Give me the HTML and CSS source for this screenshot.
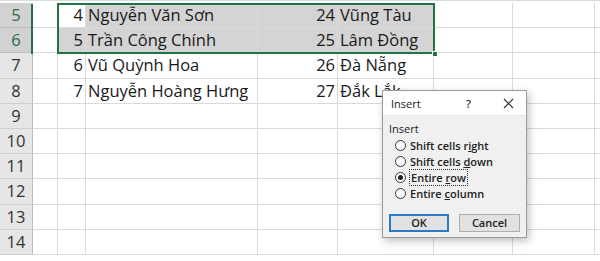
FILE: index.html
```
<!DOCTYPE html>
<html>
<head>
<meta charset="utf-8">
<link rel="stylesheet" href="styles.css">
</head>
<body>
<div class="sheet">
  <div class="grid">
    <div class="rh sel">5</div><div class="c"></div><div class="c num act">4</div><div class="c txt s">Nguyễn Văn Sơn</div><div class="c num s">24</div><div class="c txt s">Vũng Tàu</div><div class="c"></div><div class="c"></div><div class="c"></div>
    <div class="rh sel">6</div><div class="c"></div><div class="c num s">5</div><div class="c txt s">Trần Công Chính</div><div class="c num s">25</div><div class="c txt s">Lâm Đồng</div><div class="c"></div><div class="c"></div><div class="c"></div>
    <div class="rh">7</div><div class="c"></div><div class="c num">6</div><div class="c txt">Vũ Quỳnh Hoa</div><div class="c num">26</div><div class="c txt">Đà Nẵng</div><div class="c"></div><div class="c"></div><div class="c"></div>
    <div class="rh">8</div><div class="c"></div><div class="c num">7</div><div class="c txt">Nguyễn Hoàng Hưng</div><div class="c num">27</div><div class="c txt">Đắk Lắk</div><div class="c"></div><div class="c"></div><div class="c"></div>
    <div class="rh">9</div><div class="c"></div><div class="c"></div><div class="c"></div><div class="c"></div><div class="c"></div><div class="c"></div><div class="c"></div><div class="c"></div>
    <div class="rh">10</div><div class="c"></div><div class="c"></div><div class="c"></div><div class="c"></div><div class="c"></div><div class="c"></div><div class="c"></div><div class="c"></div>
    <div class="rh">11</div><div class="c"></div><div class="c"></div><div class="c"></div><div class="c"></div><div class="c"></div><div class="c"></div><div class="c"></div><div class="c"></div>
    <div class="rh">12</div><div class="c"></div><div class="c"></div><div class="c"></div><div class="c"></div><div class="c"></div><div class="c"></div><div class="c"></div><div class="c"></div>
    <div class="rh">13</div><div class="c"></div><div class="c"></div><div class="c"></div><div class="c"></div><div class="c"></div><div class="c"></div><div class="c"></div><div class="c"></div>
    <div class="rh">14</div><div class="c"></div><div class="c"></div><div class="c"></div><div class="c"></div><div class="c"></div><div class="c"></div><div class="c"></div><div class="c"></div>
  </div>
  <div class="selbox"><span class="handle"></span></div>
  <div class="hdrsel"></div>

  <div class="dialog">
    <div class="titlebar">
      <span class="title">Insert</span>
      <span class="help">?</span>
      <svg class="close" width="11" height="11" viewBox="0 0 11 11"><path d="M1 1L10 10M10 1L1 10" stroke="#333" stroke-width="1.2" fill="none"/></svg>
    </div>
    <div class="dbody">
      <div class="glabel">Insert</div>
      <div class="radios">
        <div class="radio"><span class="dot"></span><span>Shift cells r<u>i</u>ght</span></div>
        <div class="radio"><span class="dot"></span><span>Shift cells <u>d</u>own</span></div>
        <div class="radio"><span class="dot on"></span><span class="focus">Entire <u>r</u>ow</span></div>
        <div class="radio"><span class="dot"></span><span>Entire <u>c</u>olumn</span></div>
      </div>
      <div class="buttons">
        <div class="btn ok">OK</div>
        <div class="btn">Cancel</div>
      </div>
    </div>
  </div>
</div>
</body>
</html>
```
FILE: styles.css
```
* { box-sizing: border-box; }
html, body { margin: 0; padding: 0; background: #fff; }
body { width: 600px; height: 261px; overflow: hidden; font-family: "Open Sans", "Noto Sans", sans-serif; }
.sheet { position: relative; width: 600px; height: 261px; overflow: hidden; padding-top: 2px; border-top: 1px solid #d9d9d9; }
.grid {
  display: grid;
  grid-template-columns: 33px 25px 28px 172px 80px 96px 79px 82px 20px;
  grid-auto-rows: 25.2px;
}
.c {
  border-right: 1px solid #dadada;
  border-bottom: 1px solid #dadada;
  font-size: 16.5px;
  color: #1a1a1a;
  line-height: 24px;
  white-space: nowrap;
  overflow: visible;
}
.num { text-align: right; padding-right: 2px; }
.txt { padding-left: 2px; }
.s { background: #d4d4d4; }
.act { background: #fff; }
.rh {
  background: #e6e6e6;
  border-right: 1px solid #bdbdbd;
  border-bottom: 1px solid #cfcfcf;
  text-align: center;
  font-size: 16.5px;
  line-height: 24px;
  color: #333;
}
.rh.sel { background: #d2d2d2; color: #2d6b4b; border-bottom-color: #bdbdbd; }
.selbox {
  position: absolute;
  left: 57px; top: 2px;
  width: 378px; height: 51px;
  border: 2px solid #217346;
}
.handle {
  position: absolute;
  right: -5px; bottom: -5px;
  width: 6px; height: 6px;
  background: #217346;
  border: 1px solid #fff;
}
.hdrsel {
  position: absolute;
  left: 31px; top: 3px;
  width: 2px; height: 50px;
  background: #217346;
}
.dialog {
  position: absolute;
  left: 382px; top: 89px;
  width: 145px; height: 148px;
  border: 1px solid #9a9a9a;
  background: #f0f0f0;
  box-shadow: 2px 3px 8px rgba(0,0,0,0.25);
  font-size: 11px;
  color: #1a1a1a;
}
.titlebar {
  height: 25px;
  background: #fff;
  display: flex;
  align-items: center;
  padding: 0 0 0 8px;
  border-bottom: 1px solid #e4e4e4;
}
.title { flex: 1; font-size: 11px; }
.help { width: 12px; font-weight: 600; color: #333; margin-right: 25px; font-size: 11px; }
.close { margin-right: 12px; }
.dbody { padding: 5px 0 0 6px; }
.glabel { font-size: 11px; margin-bottom: 3px; }
.radios { display: flex; flex-direction: column; gap: 3px; padding-left: 6px; }
.radio { display: flex; align-items: center; height: 13px; gap: 4px; font-weight: 600; font-size: 11px; color: #222; }
.radio u { text-decoration: underline; }
.dot {
  width: 11px; height: 11px;
  border: 1px solid #333;
  border-radius: 50%;
  background: #fff;
  position: relative;
}
.dot.on::after {
  content: "";
  position: absolute;
  left: 2px; top: 2px;
  width: 5px; height: 5px;
  border-radius: 50%;
  background: #222;
}
.focus { outline: 1px dotted #333; outline-offset: 0; padding: 0 1px; }
.buttons { display: flex; gap: 10px; margin-top: 14px; padding-left: 0; }
.btn {
  width: 61px; height: 18px;
  background: #e1e1e1;
  border: 1px solid #adadad;
  text-align: center;
  line-height: 16px;
  font-size: 11px;
  font-weight: 600;
  color: #222;
}
.btn.ok { width: 60px; border: 2px solid #2b7bc4; line-height: 14px; }
```
